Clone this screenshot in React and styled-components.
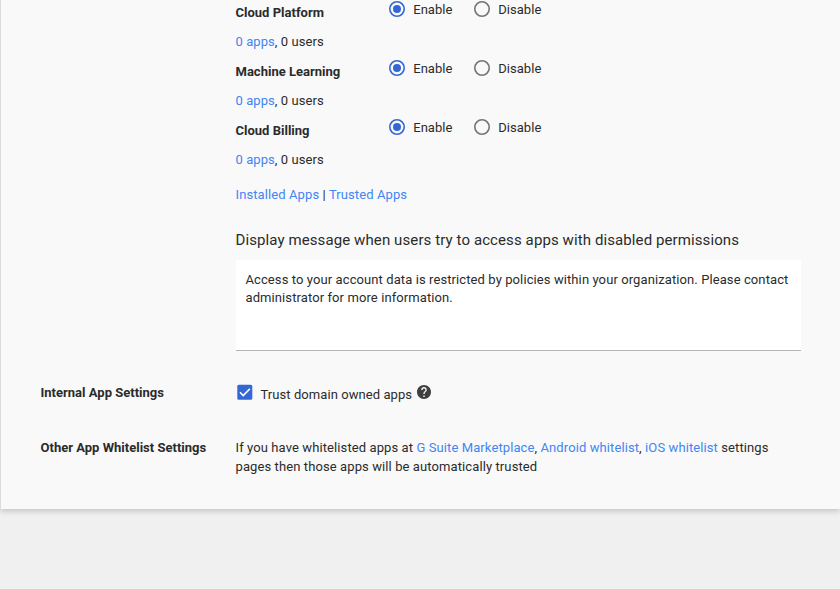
import React, { useState } from "react";
import styled, { createGlobalStyle } from "styled-components";

const GlobalStyle = createGlobalStyle`
  * { box-sizing: border-box; }
  body { margin: 0; background: #f0f0f0; overflow: hidden; }
`;

const Page = styled.div`
  height: 589px;
  background: #f0f0f0;
  overflow: hidden;
  font: 13px/19px Roboto, sans-serif;
  letter-spacing: 0.1px;
  color: #2b2b2b;
`;

const Card = styled.main`
  height: 509px;
  padding: 0 39px 0 39.5px;
  background: #f9f9f9;
  border-left: 1px solid #dcdcdc;
  box-shadow: 0 2px 6px rgba(0, 0, 0, 0.2);
`;

const Section = styled.section`
  display: grid;
  grid-template-columns: 195px 565px;
  padding-top: ${(p) => p.$top || 0}px;
`;

const Label = styled.div`
  font-weight: 700;
  letter-spacing: 0.01px;
  white-space: nowrap;
`;

const Permission = styled.div`
  display: grid;
  grid-template-columns: 153px 1fr;
  height: 59px;
`;

const Scope = styled.div`
  padding-top: 3px;
`;

const Usage = styled.div`
  padding-top: 10px;
  letter-spacing: 0.07px;
`;

const Choices = styled.div`
  display: flex;
`;

const Choice = styled.label`
  display: flex;
  align-items: center;
  height: 18px;
  width: 85px;
  gap: 8.2px;
  letter-spacing: 0.05px;
`;

const RadioIcon = styled.svg`
  width: 16px;
  height: 16px;
  margin-left: 0.5px;
  flex: none;
`;

const Link = styled.a`
  color: #4285f4;
  text-decoration: none;
`;

const AppLinks = styled.div`
  padding-top: 8px;
`;

const Heading = styled.h2`
  margin: 26px 0 0;
  font-size: 15px;
  line-height: 20px;
  font-weight: 400;
  white-space: nowrap;
`;

const Message = styled.textarea`
  display: block;
  width: 565px;
  height: 91px;
  margin: 10px 0 0;
  padding: 11px 5px 10px 10px;
  border: 0;
  border-bottom: 1px solid #b4b4b4;
  background: #fff;
  color: #2b2b2b;
  font: 13px/18px Roboto, sans-serif;
  letter-spacing: 0.095px;
  resize: none;
  outline: 0;
`;

const TrustRow = styled.div`
  display: flex;
  align-items: flex-start;
`;

const CheckIcon = styled.svg`
  width: 16px;
  height: 16px;
  margin: 1px 7.5px 0 1.5px;
`;

const TrustText = styled.span`
  padding-top: 2px;
  letter-spacing: 0.07px;
`;

const HelpIcon = styled.svg`
  width: 14px;
  height: 14px;
  margin: 2px 0 0 5px;
`;

function Radio({ on }) {
  const color = on ? "#3367d6" : "#747474";
  return (
    <RadioIcon viewBox="0 0 16 16">
      <circle cx="8" cy="8" r="7.2" fill="none" stroke={color} strokeWidth="1.6" />
      {on && <circle cx="8" cy="8" r="4" fill={color} />}
    </RadioIcon>
  );
}

function PermissionRow({ name }) {
  const [enabled, setEnabled] = useState(true);
  return (
    <Permission>
      <Scope>
        <Label>{name}</Label>
        <Usage><Link>0 apps</Link>, 0 users</Usage>
      </Scope>
      <Choices>
        <Choice onClick={() => setEnabled(true)}><Radio on={enabled} />Enable</Choice>
        <Choice onClick={() => setEnabled(false)}><Radio on={!enabled} />Disable</Choice>
      </Choices>
    </Permission>
  );
}

export default function App() {
  return (
    <Page>
      <GlobalStyle />
      <Card>
        <Section>
          <div />
          <div>
            {["Cloud Platform", "Machine Learning", "Cloud Billing"].map((n) => <PermissionRow key={n} name={n} />)}
            <AppLinks><Link>Installed Apps</Link> | <Link>Trusted Apps</Link></AppLinks>
            <Heading>Display message when users try to access apps with disabled permissions</Heading>
            <Message defaultValue="Access to your account data is restricted by policies within your organization. Please contact administrator for more information." />
          </div>
        </Section>
        <Section $top={32}>
          <Label>Internal App Settings</Label>
          <TrustRow>
            <CheckIcon viewBox="0 0 16 16">
              <rect x="0.3" y="0.7" width="15" height="15" rx="1.5" fill="#3367d6" />
              <path d="M3 8.300l3.200 3.200L12.800 4.900" fill="none" stroke="#fff" strokeWidth="1.6" />
            </CheckIcon>
            <TrustText>Trust domain owned apps</TrustText>
            <HelpIcon viewBox="2 2 20 20">
              <path fill="#404040" d="M12 2C6.48 2 2 6.48 2 12s4.48 10 10 10 10-4.48 10-10S17.520 2 12 2zm1 17h-2v-2h2v2zm2.070-7.750l-.9.920C13.450 12.900 13 13.500 13 15h-2v-.5c0-1.100.450-2.100 1.170-2.830l1.240-1.260c.370-.360.590-.860.590-1.410 0-1.100-.9-2-2-2s-2 .9-2 2H8c0-2.210 1.790-4 4-4s4 1.790 4 4c0 .880-.360 1.680-.930 2.250z" />
            </HelpIcon>
          </TrustRow>
        </Section>
        <Section $top={34}>
          <Label>Other App Whitelist Settings</Label>
          <div>
            If you have whitelisted apps at <Link>G Suite Marketplace</Link>, <Link>Android whitelist</Link>, <Link>iOS whitelist</Link> settings pages then those apps will be automatically trusted
          </div>
        </Section>
      </Card>
    </Page>
  );
}
